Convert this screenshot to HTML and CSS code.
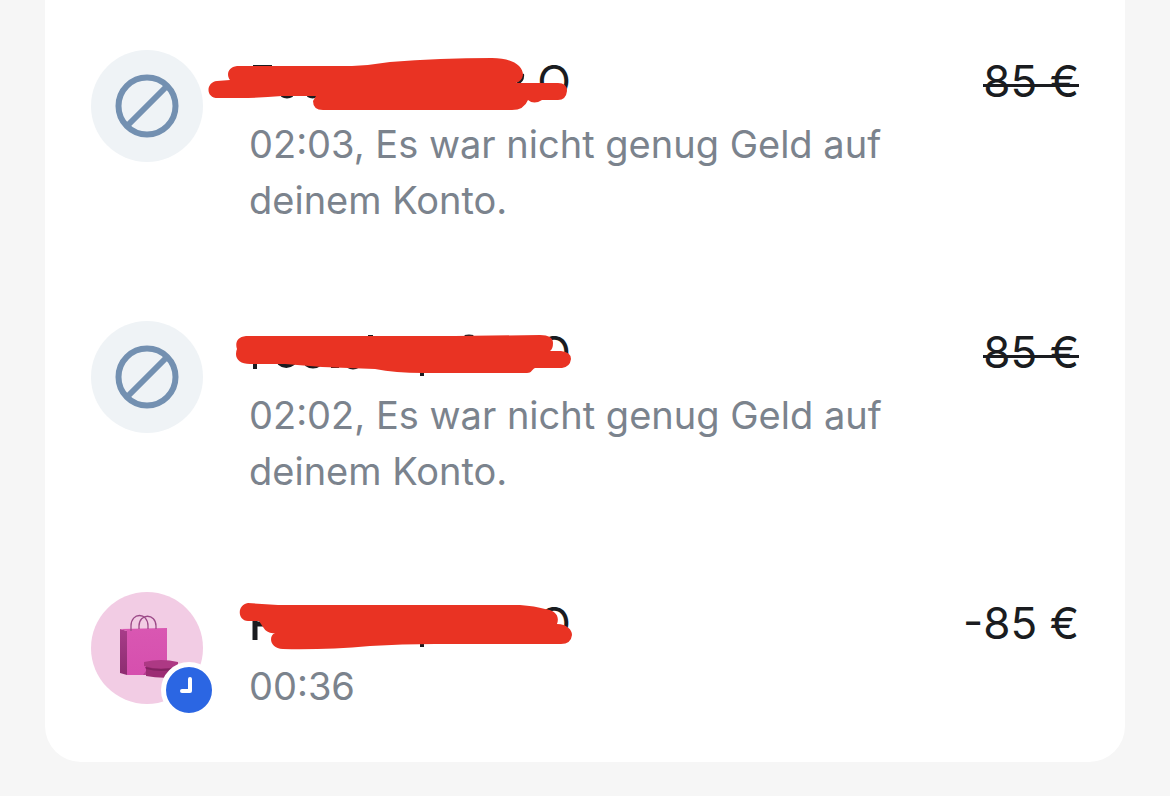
FILE: index.html
```html
<!DOCTYPE html>
<html lang="de">
<head>
  <meta charset="UTF-8">
  <meta name="viewport" content="width=device-width, initial-scale=1">
  <title>Umsätze</title>
  <link rel="stylesheet" href="styles.css">
</head>
<body>
  <main class="card">
    <ul class="transactions">
      <li class="transaction">
        <div class="avatar">
          <svg class="declined" viewBox="0 0 64 64" aria-hidden="true">
            <circle cx="32" cy="32" r="28.5"/>
            <path d="M13 51L51 13"/>
          </svg>
        </div>
        <div class="details">
          <div class="name">
            <span class="name-end">O</span>
            <svg class="redaction" viewBox="0 0 400 64" aria-hidden="true">
              <path class="mark" d="M53 17h19M82 45q5 3 10 0M108 45q5 3 8 0M317 33q6-3 5-9"/>
              <path d="M37 16H152Q172 15 190 12Q240 8 292 8C311 8 323 15 323 25Q322 31 316 33H358Q367 33 367 41Q366 50 358 50H342Q334 55 328 50Q324 60 312 60H123Q113 60 113 51L116 46H82Q60 48 40 48H18C5 48 6 32 17 31L30 30C26 25 28 17 37 16Z"/>
            </svg>
          </div>
          <p class="info">02:03, Es war nicht genug Geld auf deinem Konto.</p>
        </div>
        <del class="amount">85 €</del>
      </li>

      <li class="transaction">
        <div class="avatar">
          <svg class="declined" viewBox="0 0 64 64" aria-hidden="true">
            <circle cx="32" cy="32" r="28.5"/>
            <path d="M13 51L51 13"/>
          </svg>
        </div>
        <div class="details">
          <div class="name">
            <span class="name-end">O</span>
            <svg class="redaction" viewBox="0 0 400 64" aria-hidden="true">
              <path class="mark" d="M55 42v6M79 42q7 6 15 0M106 43q7 5 14 0M131 45h8M148 45q5 3 10 0M168 16h5M265 16q4-1 8 0M222 50v5"/>
              <path d="M46 15H255L340 14Q353 14 353 22Q353 28 350 30H361Q371 31 371 38Q370 46 362 47H335C331 49 332 52 327 52H223Q195 52 175 48L122 46L85 43H50C41 43 36 39 36 33Q36 30 37 28C35 22 37 16 46 15Z"/>
            </svg>
          </div>
          <p class="info">02:02, Es war nicht genug Geld auf deinem Konto.</p>
        </div>
        <del class="amount">85 €</del>
      </li>

      <li class="transaction">
        <div class="avatar avatar-shopping">
          <svg class="bag" viewBox="0 0 112 112" aria-hidden="true">
            <defs>
              <linearGradient id="bagFront" x1="0" y1="0" x2="0" y2="1">
                <stop offset="0" stop-color="#d957b2"/>
                <stop offset="1" stop-color="#d64fae"/>
              </linearGradient>
              <linearGradient id="bagSide" x1="0" y1="0" x2="0" y2="1">
                <stop offset="0" stop-color="#a83c89"/>
                <stop offset="1" stop-color="#8d2d70"/>
              </linearGradient>
            </defs>
            <path d="M29 37L36 39V83L29 81Z" fill="url(#bagSide)"/>
            <path d="M29 37L76 36V83H36V39Z" fill="url(#bagFront)"/>
            <path d="M60 72L76 69V83H52Z" fill="#b83d92"/>
            <path class="handle" d="M40 39V34C40 20 57 20 57 34V37M48 37V34C48 21 65 21 65 34V37"/>
            <path d="M55 73H86V85Q70 87 55 84Z" fill="#9c2c74"/>
            <path d="M53 70Q70 66 87 70V74Q70 79 53 74Z" fill="#ad3984"/>
            <path d="M54 75Q70 79 86 75V77Q70 81 55 77Z" fill="#822361"/>
          </svg>
          <span class="badge">
            <svg viewBox="0 0 46 46" aria-hidden="true">
              <path d="M24 12V24H16"/>
            </svg>
          </span>
        </div>
        <div class="details">
          <div class="name">
            <span class="name-end">O</span>
            <svg class="redaction" viewBox="0 0 400 64" aria-hidden="true">
              <path class="mark mark-thick" d="M55 24v24M55 32h9"/>
              <path class="mark" d="M222 50v5"/>
              <path d="M48 11L78 13H320Q335 14 345 17C355 18 360 24 357 32C367 32 372 38 372 43Q371 52 361 52H235Q202 52 170 54Q125 58 83 57C70 57 68 44 75 41Q67 42 63 35L59 29H48C37 28 37 13 48 11Z"/>
            </svg>
          </div>
          <p class="info">00:36</p>
        </div>
        <span class="amount">-85 €</span>
      </li>
    </ul>
  </main>
</body>
</html>
```
FILE: styles.css
```css
* {
  box-sizing: border-box;
}

body {
  margin: 0;
  background: #f6f6f6;
  color: #1a1c20;
  font-family: Inter, "Liberation Sans", sans-serif;
}

.card {
  margin: 0 45px 34px;
  padding: 50px 46px 48px;
  background: #fff;
  border-radius: 0 0 36px 36px;
}

.transactions {
  display: flex;
  flex-direction: column;
  gap: 93px;
  margin: 0;
  padding: 0;
  list-style: none;
}

.transaction {
  display: flex;
  align-items: flex-start;
}

.avatar {
  position: relative;
  display: flex;
  flex: none;
  align-items: center;
  justify-content: center;
  width: 112px;
  height: 112px;
  margin-right: 46px;
  border-radius: 50%;
  background: #eff3f6;
}

.avatar-shopping {
  background: #f2cce4;
}

.declined {
  width: 64px;
  height: 64px;
  fill: none;
  stroke: #7390b1;
  stroke-width: 6;
}

.bag {
  width: 112px;
  height: 112px;
}

.handle {
  fill: none;
  stroke: #9c4a88;
  stroke-width: 1.3;
}

/* pending clock, overlaps the avatar edge */
.badge {
  position: absolute;
  right: -14px;
  bottom: -14px;
  width: 56px;
  height: 56px;
  border: 5px solid #fff;
  border-radius: 50%;
  background: #2b66e3;
}

.badge svg {
  display: block;
  width: 46px;
  height: 46px;
  fill: none;
  stroke: #fff;
  stroke-width: 4;
  stroke-linecap: round;
  stroke-linejoin: round;
}

.details {
  flex: 1;
  max-width: 660px;
}

.name {
  position: relative;
  display: flex;
  justify-content: flex-end;
  width: 322px;
  height: 62px;
  font-size: 44px;
  line-height: 62px;
}

/* marker stroke drawn across the name */
.redaction {
  position: absolute;
  top: 0;
  left: -49px;
  width: 400px;
  height: 64px;
  fill: #e93323;
}

.mark {
  fill: none;
  stroke: #1a1c20;
  stroke-width: 4;
}

.mark-thick {
  stroke-width: 5;
}

.info {
  margin: 4px 0 0;
  color: #7b838d;
  font-size: 38px;
  line-height: 56px;
}

.amount {
  position: relative;
  margin-left: auto;
  font-size: 44px;
  line-height: 62px;
  white-space: nowrap;
  text-decoration: none;
}

/* strike line sits a little below the middle of the digits */
del.amount::after {
  content: "";
  position: absolute;
  top: 34px;
  left: 0;
  right: 0;
  height: 3px;
  background: #1a1c20;
}
```
